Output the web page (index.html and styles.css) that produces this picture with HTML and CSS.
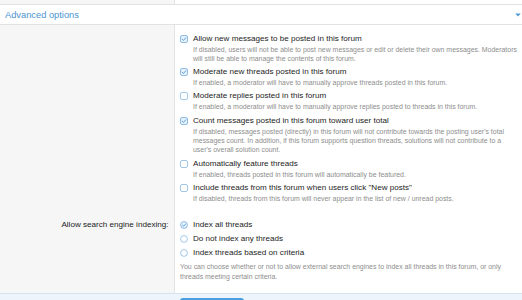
FILE: index.html
```html
<!DOCTYPE html>
<html lang="en">
<head>
<meta charset="utf-8">
<title>Advanced options</title>
<link rel="stylesheet" href="styles.css">
</head>
<body>
<div class="form-block">
  <div class="form-row stub"><div class="row-label"></div><div class="row-input"></div></div>
  <h2 class="section-header">
    <span>Advanced options</span>
    <svg class="chev" width="6" height="4" viewBox="0 0 6 4"><path d="M0.3 0.4 L3 3.4 L5.7 0.4 Z" fill="#4d9ad6"/></svg>
  </h2>

  <div class="form-row">
    <div class="row-label"></div>
    <div class="row-input">
      <ul class="choices">
        <li class="choice">
          <label class="choice-label"><svg class="box" viewBox="0 0 16 16"><rect x="1" y="1" width="14" height="14" rx="3" class="box-on"/><path d="M4.3 8.3 L7 10.8 L11.8 5.4" class="tick"/></svg><span>Allow new messages to be posted in this forum</span></label>
          <p class="hint">If disabled, users will not be able to post new messages or edit or delete their own messages. Moderators will still be able to manage the contents of this forum.</p>
        </li>
        <li class="choice">
          <label class="choice-label"><svg class="box" viewBox="0 0 16 16"><rect x="1" y="1" width="14" height="14" rx="3" class="box-on"/><path d="M4.3 8.3 L7 10.8 L11.8 5.4" class="tick"/></svg><span>Moderate new threads posted in this forum</span></label>
          <p class="hint">If enabled, a moderator will have to manually approve threads posted in this forum.</p>
        </li>
        <li class="choice">
          <label class="choice-label"><svg class="box" viewBox="0 0 16 16"><rect x="1" y="1" width="14" height="14" rx="3" class="box-off"/></svg><span>Moderate replies posted in this forum</span></label>
          <p class="hint">If enabled, a moderator will have to manually approve replies posted to threads in this forum.</p>
        </li>
        <li class="choice">
          <label class="choice-label"><svg class="box" viewBox="0 0 16 16"><rect x="1" y="1" width="14" height="14" rx="3" class="box-on"/><path d="M4.3 8.3 L7 10.8 L11.8 5.4" class="tick"/></svg><span>Count messages posted in this forum toward user total</span></label>
          <p class="hint">If disabled, messages posted (directly) in this forum will not contribute towards the posting user's total messages count. In addition, if this forum supports question threads, solutions will not contribute to a user's overall solution count.</p>
        </li>
        <li class="choice">
          <label class="choice-label"><svg class="box" viewBox="0 0 16 16"><rect x="1" y="1" width="14" height="14" rx="3" class="box-off"/></svg><span>Automatically feature threads</span></label>
          <p class="hint">If enabled, threads posted in this forum will automatically be featured.</p>
        </li>
        <li class="choice">
          <label class="choice-label"><svg class="box" viewBox="0 0 16 16"><rect x="1" y="1" width="14" height="14" rx="3" class="box-off"/></svg><span>Include threads from this forum when users click "New posts"</span></label>
          <p class="hint">If disabled, threads from this forum will never appear in the list of new / unread posts.</p>
        </li>
      </ul>
    </div>
  </div>

  <div class="form-row radio-row">
    <div class="row-label">Allow search engine indexing:</div>
    <div class="row-input">
      <ul class="radios">
        <li class="choice-label"><svg class="box" viewBox="0 0 16 16"><circle cx="8" cy="8" r="6.8" class="box-on"/><path d="M5 8.3 L7.2 10.4 L11.2 6" class="tick"/></svg><span>Index all threads</span></li>
        <li class="choice-label"><svg class="box" viewBox="0 0 16 16"><circle cx="8" cy="8" r="6.8" class="box-off"/></svg><span>Do not index any threads</span></li>
        <li class="choice-label"><svg class="box" viewBox="0 0 16 16"><circle cx="8" cy="8" r="6.8" class="box-off"/></svg><span>Index threads based on criteria</span></li>
      </ul>
      <p class="explain">You can choose whether or not to allow external search engines to index all threads in this forum, or only threads meeting certain criteria.</p>
    </div>
  </div>

  <div class="submit-row">
    <button class="btn" type="button" aria-label="Save"></button>
  </div>
</div>
</body>
</html>
```

FILE: styles.css
```css
* { box-sizing: border-box; }

html, body {
  margin: 0;
  padding: 0;
  background: #ffffff;
}

body {
  font-family: "Liberation Sans", Arial, sans-serif;
  color: #1c1c1c;
  overflow: hidden;
}

.form-block {
  width: 522px;
}

.form-row {
  display: grid;
  grid-template-columns: 175px 1fr;
}

.row-label {
  background: #f6f6f6;
  border-right: 1px solid #e4e4e4;
  font-size: 8.1px;
  line-height: 12px;
  text-align: right;
  padding: 7.7px 5.5px 0 0;
}

.row-input {
  padding: 7.5px 1px 8px 5px;
}

.stub {
  height: 5px;
  border-bottom: 1px solid #e2e2e2;
}

.stub .row-input { padding: 0; }
.stub .row-label { padding: 0; }

.section-header {
  margin: 0;
  height: 20px;
  display: flex;
  align-items: center;
  justify-content: space-between;
  padding: 0 1px 0 5px;
  font-size: 9.3px;
  font-weight: normal;
  color: #4b95d1;
  border-bottom: 1px solid #e2e2e2;
  background: #ffffff;
}

.chev { display: block; }

.choices, .radios {
  list-style: none;
  margin: 0;
  padding: 0;
}

.choices {
  display: flex;
  flex-direction: column;
  gap: 3px;
}

.radios {
  display: flex;
  flex-direction: column;
  gap: 2.2px;
}

.choice-label {
  display: flex;
  align-items: center;
  gap: 5px;
  font-size: 8.1px;
  line-height: 12px;
  color: #1c1c1c;
}

.box {
  width: 8px;
  height: 8px;
  flex: 0 0 8px;
  display: block;
}

.box-on {
  fill: #e7f1fb;
  stroke: #6fa9dc;
  stroke-width: 1.5;
}

.box-off {
  fill: #ffffff;
  stroke: #86b6e0;
  stroke-width: 1.5;
}

.tick {
  fill: none;
  stroke: #4a93d3;
  stroke-width: 1.7;
  stroke-linecap: round;
  stroke-linejoin: round;
}

.hint {
  margin: 0;
  padding-left: 13px;
  font-size: 6.95px;
  line-height: 9.3px;
  color: #8d8d8d;
}

.radio-row .row-input {
  padding-bottom: 10.3px;
}

.explain {
  margin: 3.4px 0 0 0;
  font-size: 6.95px;
  line-height: 10px;
  color: #8d8d8d;
}

.submit-row {
  border-top: 1px solid #d5e3f0;
  background: #edf4fb;
  padding: 4px 0 0 180px;
  height: 30px;
}

.btn {
  display: block;
  width: 64px;
  height: 20px;
  border: 0;
  border-radius: 3px;
  background: #4a9fe0;
}
```
